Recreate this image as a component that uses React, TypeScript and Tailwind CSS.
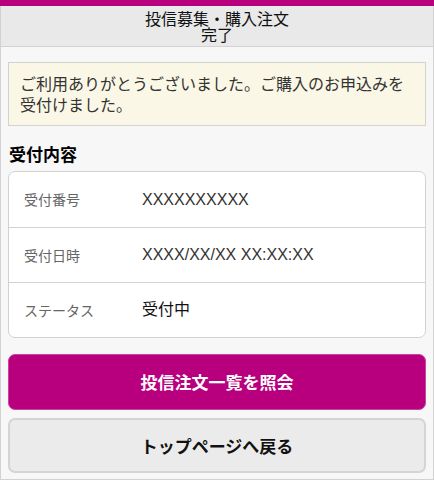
const ROWS = [
  { label: "受付番号", value: "XXXXXXXXXX", dark: false },
  { label: "受付日時", value: "XXXX/XX/XX XX:XX:XX", dark: false },
  { label: "ステータス", value: "受付中", dark: true },
]

export default function App() {
  return (
    <div
      className="h-[480px] w-[434px] bg-[#f7f7f7] text-[#222]"
      style={{ fontFamily: '"Noto Sans CJK JP", "Noto Sans", sans-serif' }}
    >
      <div className="h-[6px] bg-[#b8007e]" />
      <div className="flex h-[474px] flex-col border-x border-b border-[#d2d2d2]">
        {/* header */}
        <header className="flex h-[41px] flex-col items-center justify-center border-b border-[#d2d2d2] bg-[#e9e9e9] text-[16px] leading-[16px] text-[#111]">
          <span>投信募集・購入注文</span>
          <span>完了</span>
        </header>

        <main className="px-[7px] pt-[15px]">
          <div className="border border-[#d2d2d2] bg-[#faf7e6] px-[11px] pt-[10px] pb-[10px] text-[16px] leading-[21px] text-[#333]">
            ご利用ありがとうございました。ご購入のお申込みを受付けました。
          </div>

          <h2 className="mt-[16px] mb-[5px] px-[1px] text-[17px] font-bold leading-[24px] text-black">受付内容</h2>

          <div className="overflow-hidden rounded-[7px] border border-[#d2d2d2] bg-white">
            {ROWS.map((row, i) => (
              <div
                key={row.label}
                className={`flex h-[55px] items-center px-[15px] ${i > 0 ? "border-t border-[#d2d2d2]" : ""}`}
              >
                <span className="w-[118px] text-[14px] text-[#666]">{row.label}</span>
                <span
                  className={`text-[16px] ${row.dark ? "text-[#111]" : "text-[#333]"}`}
                  style={{ fontFamily: '"Liberation Sans", "Noto Sans CJK JP", sans-serif' }}
                >
                  {row.value}
                </span>
              </div>
            ))}
          </div>

          <button className="mt-[16px] flex h-[56px] w-full items-center justify-center rounded-[7px] border border-[#c9439f] bg-[#b8007e] text-[17px] font-bold text-white">
            投信注文一覧を照会
          </button>
          <button className="mt-[8px] flex h-[55px] w-full items-center justify-center rounded-[7px] border-2 border-[#d4d4d4] bg-[#ebebeb] text-[17px] font-bold text-[#111]">
            トップページへ戻る
          </button>
        </main>
      </div>
    </div>
  )
}
